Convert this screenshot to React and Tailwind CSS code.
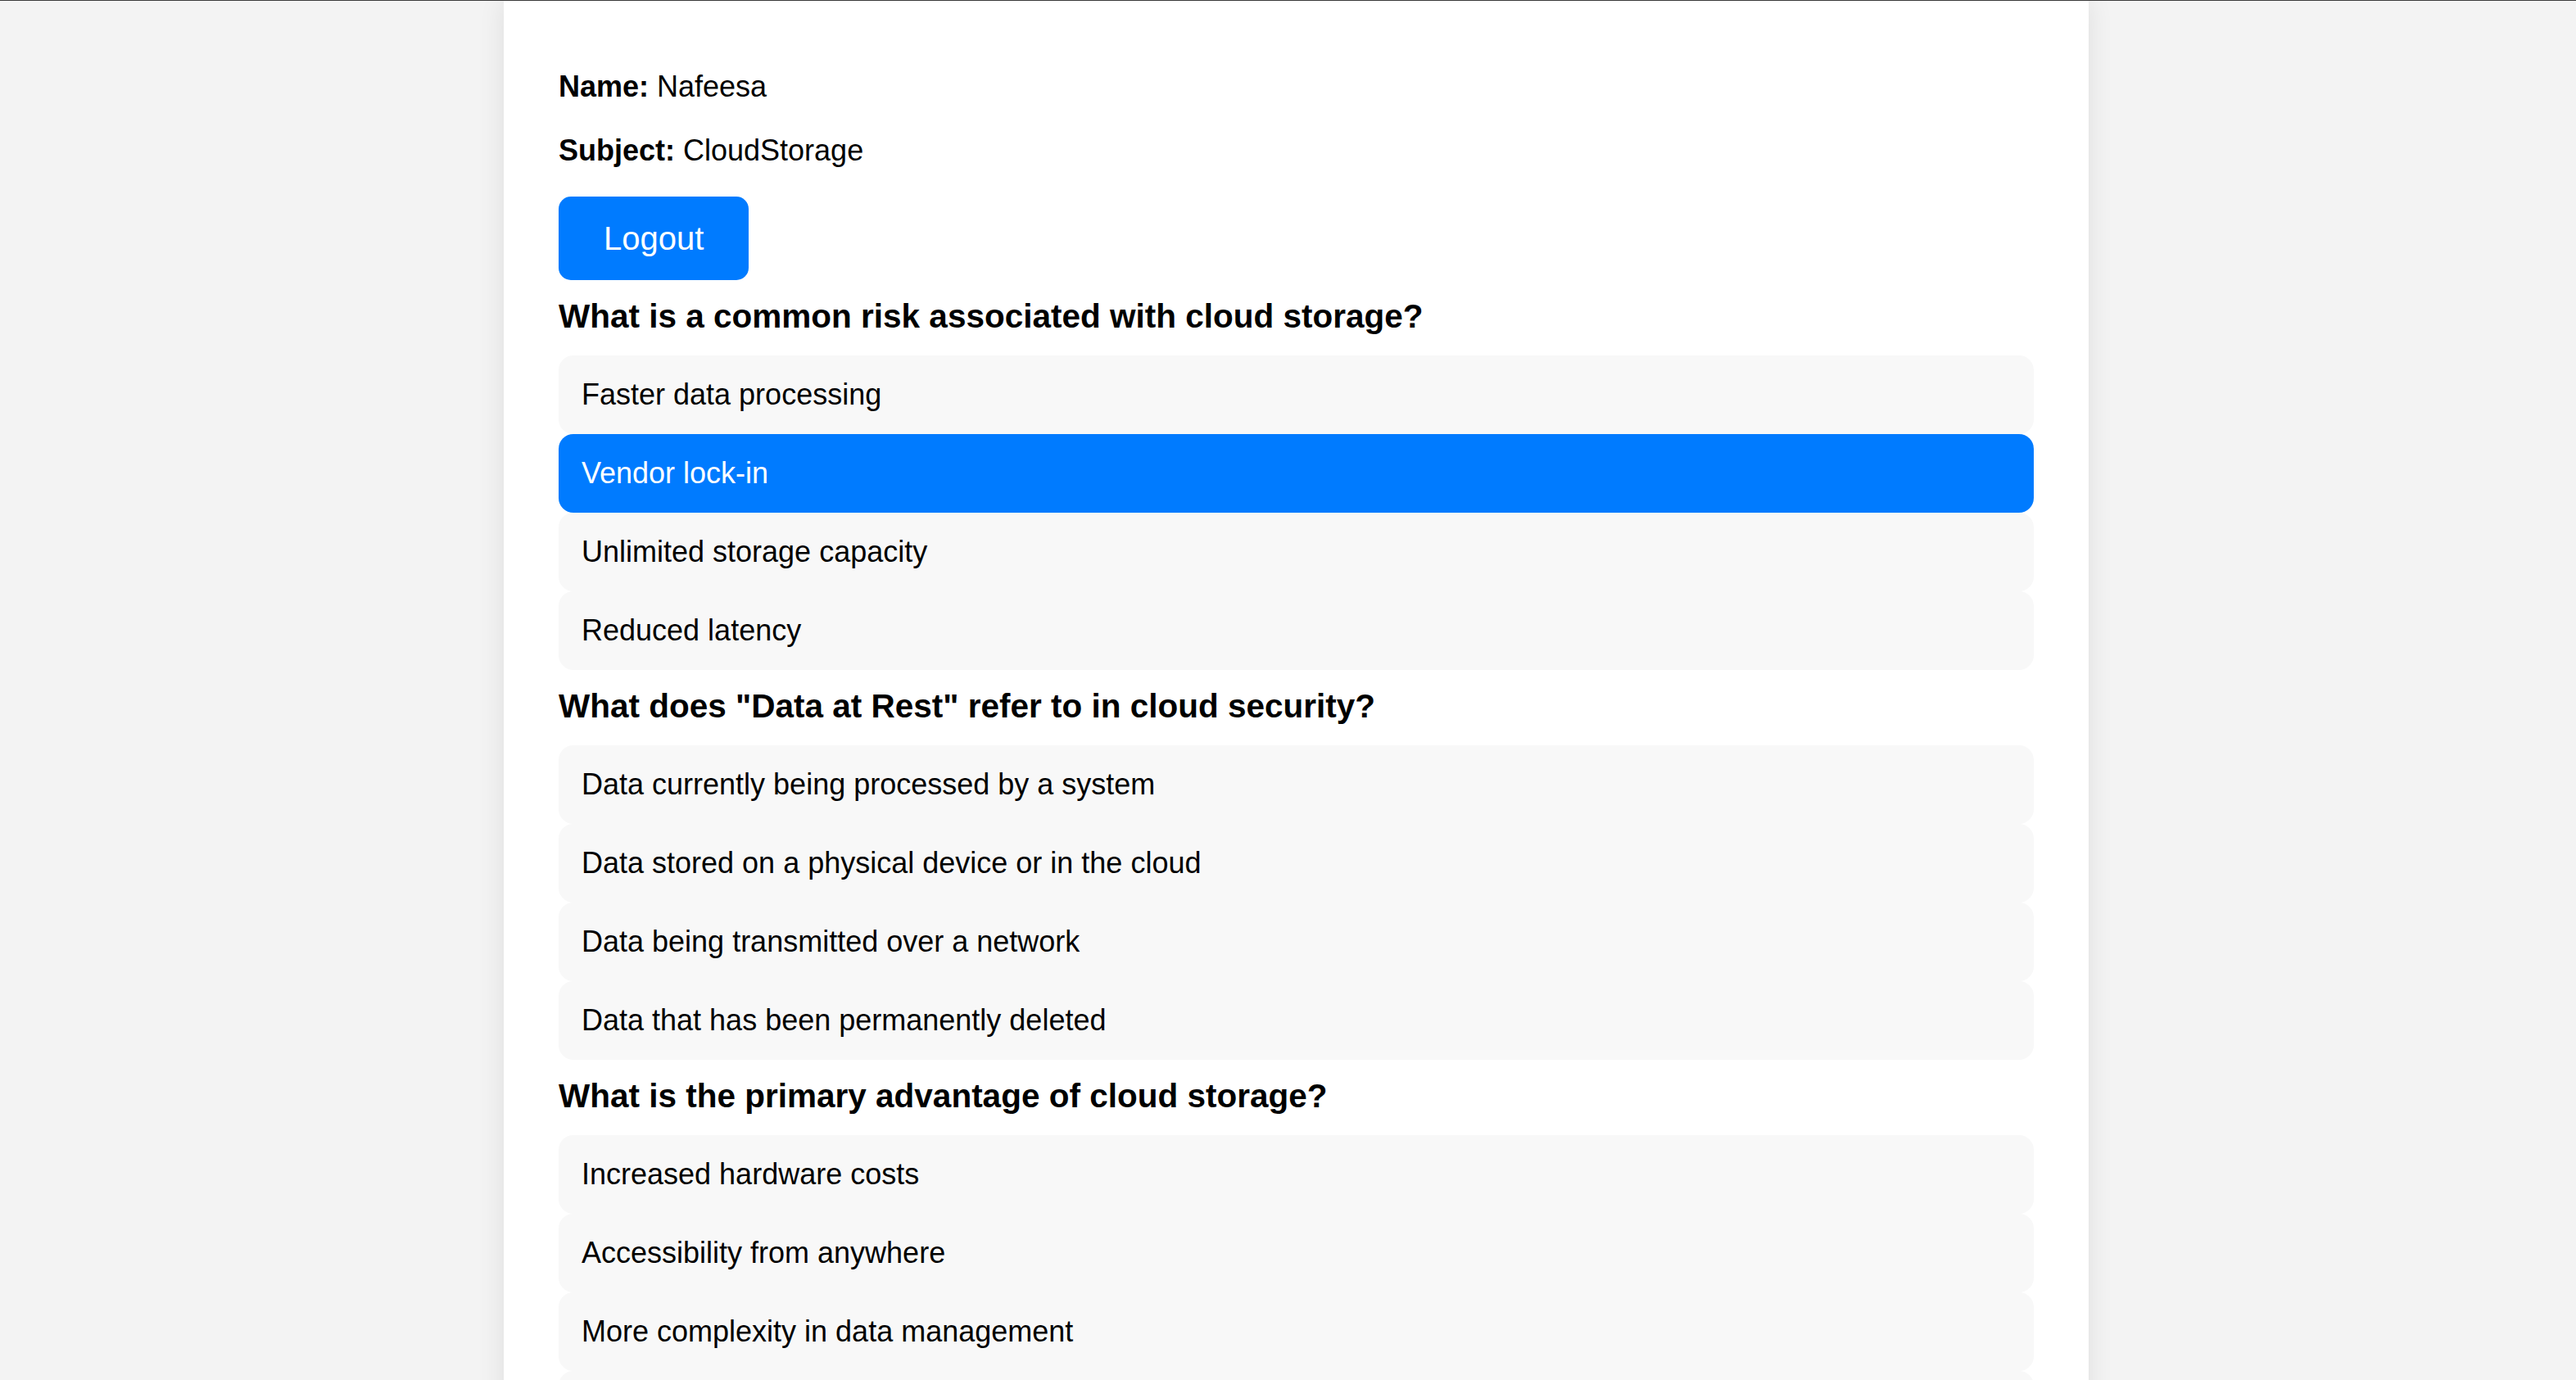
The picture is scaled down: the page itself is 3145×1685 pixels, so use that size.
import React from "react";

const questions = [
  {
    q: "What is a common risk associated with cloud storage?",
    options: [
      "Faster data processing",
      "Vendor lock-in",
      "Unlimited storage capacity",
      "Reduced latency",
    ],
    selected: 1,
  },
  {
    q: 'What does "Data at Rest" refer to in cloud security?',
    options: [
      "Data currently being processed by a system",
      "Data stored on a physical device or in the cloud",
      "Data being transmitted over a network",
      "Data that has been permanently deleted",
    ],
    selected: -1,
  },
  {
    q: "What is the primary advantage of cloud storage?",
    options: [
      "Increased hardware costs",
      "Accessibility from anywhere",
      "More complexity in data management",
      "Limited data sharing",
    ],
    selected: -1,
  },
];

export default function App() {
  return (
    <div
      className="min-h-screen bg-[#f3f3f3] border-t border-[#3c3c3c] text-black"
      style={{ fontFamily: '"Liberation Sans", Arial, sans-serif' }}
    >
      <div className="ml-[615px] w-[1935px] min-h-[1700px] bg-white shadow-[0_0_30px_rgba(0,0,0,0.09)] px-[67px] pt-[84px] pb-[60px]">
        <p className="text-[36px] leading-[41px]">
          <span className="font-bold">Name:</span> Nafeesa
        </p>
        <p className="text-[36px] leading-[41px] mt-[37px]">
          <span className="font-bold">Subject:</span> CloudStorage
        </p>
        <button className="mt-[36px] h-[102px] px-[55px] rounded-[15px] bg-[#007bff] text-white text-[40px] leading-[46px]">
          Logout
        </button>
        {questions.map((item, qi) => (
          <div key={qi}>
            <h3 className="mt-[21px] mb-[25px] text-[40.5px] leading-[46px] font-bold">
              {item.q}
            </h3>
            <div className="flex flex-col">
              {item.options.map((opt, oi) => (
                <div
                  key={oi}
                  className={
                    oi === item.selected
                      ? "h-[96px] flex items-center pl-[28px] rounded-[18px] bg-[#007bff] text-white text-[36px]"
                      : "h-[96px] flex items-center pl-[28px] rounded-[18px] bg-[#f8f8f8] text-black text-[36px]"
                  }
                >
                  {opt}
                </div>
              ))}
            </div>
          </div>
        ))}
      </div>
    </div>
  );
}
